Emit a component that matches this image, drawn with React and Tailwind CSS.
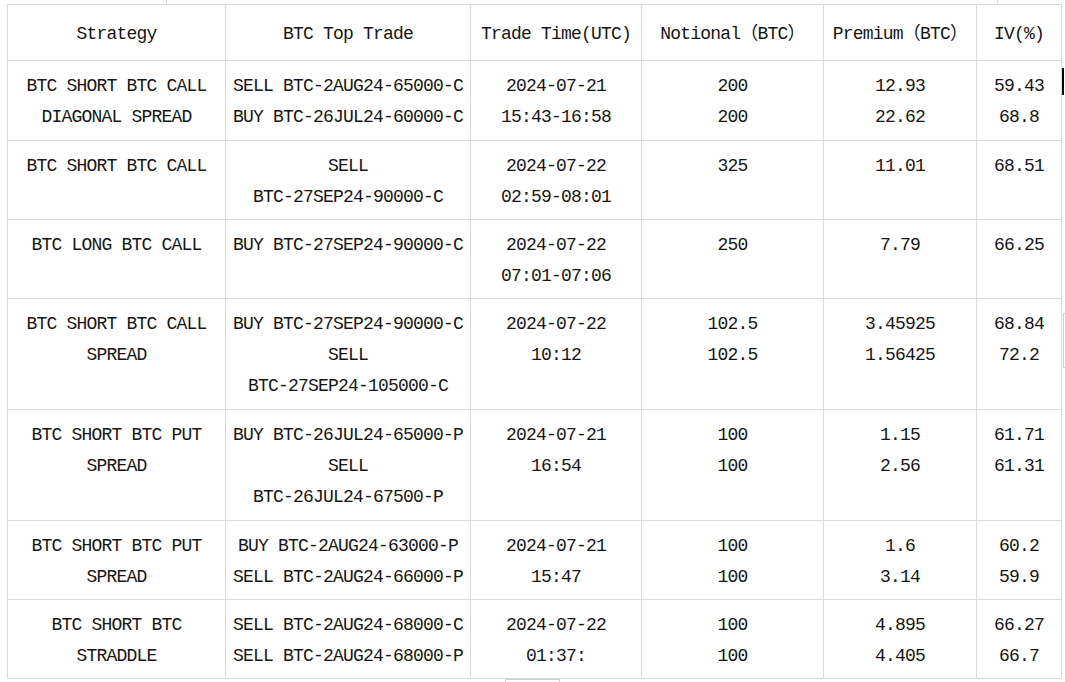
import React from 'react';

const headers = ['Strategy', 'BTC Top Trade', 'Trade Time(UTC)', 'Notional（BTC）', 'Premium（BTC）', 'IV(%)'];

// each cell is an array of lines, broken where the sheet breaks them
const rows = [
  {
    h: 'h-[80px]',
    strategy: ['BTC SHORT BTC CALL', 'DIAGONAL SPREAD'],
    trade: ['SELL BTC-2AUG24-65000-C', 'BUY BTC-26JUL24-60000-C'],
    time: ['2024-07-21', '15:43-16:58'],
    notional: ['200', '200'],
    premium: ['12.93', '22.62'],
    iv: ['59.43', '68.8'],
  },
  {
    h: 'h-[79px]',
    strategy: ['BTC SHORT BTC CALL'],
    trade: ['SELL', 'BTC-27SEP24-90000-C'],
    time: ['2024-07-22', '02:59-08:01'],
    notional: ['325'],
    premium: ['11.01'],
    iv: ['68.51'],
  },
  {
    h: 'h-[79px]',
    strategy: ['BTC LONG BTC CALL'],
    trade: ['BUY BTC-27SEP24-90000-C'],
    time: ['2024-07-22', '07:01-07:06'],
    notional: ['250'],
    premium: ['7.79'],
    iv: ['66.25'],
  },
  {
    h: 'h-[111px]',
    strategy: ['BTC SHORT BTC CALL', 'SPREAD'],
    trade: ['BUY BTC-27SEP24-90000-C', 'SELL', 'BTC-27SEP24-105000-C'],
    time: ['2024-07-22', '10:12'],
    notional: ['102.5', '102.5'],
    premium: ['3.45925', '1.56425'],
    iv: ['68.84', '72.2'],
  },
  {
    h: 'h-[111px]',
    strategy: ['BTC SHORT BTC PUT', 'SPREAD'],
    trade: ['BUY BTC-26JUL24-65000-P', 'SELL', 'BTC-26JUL24-67500-P'],
    time: ['2024-07-21', '16:54'],
    notional: ['100', '100'],
    premium: ['1.15', '2.56'],
    iv: ['61.71', '61.31'],
  },
  {
    h: 'h-[79px]',
    strategy: ['BTC SHORT BTC PUT', 'SPREAD'],
    trade: ['BUY BTC-2AUG24-63000-P', 'SELL BTC-2AUG24-66000-P'],
    time: ['2024-07-21', '15:47'],
    notional: ['100', '100'],
    premium: ['1.6', '3.14'],
    iv: ['60.2', '59.9'],
  },
  {
    h: 'h-[79px]',
    strategy: ['BTC SHORT BTC', 'STRADDLE'],
    trade: ['SELL BTC-2AUG24-68000-C', 'SELL BTC-2AUG24-68000-P'],
    time: ['2024-07-22', '01:37:'],
    notional: ['100', '100'],
    premium: ['4.895', '4.405'],
    iv: ['66.27', '66.7'],
  },
];

const Lines = ({ lines }) => (
  <>
    {lines.map((l, i) => (
      <div key={i} className="whitespace-nowrap">{l}</div>
    ))}
  </>
);

const App = () => {
  const cell = 'border border-[#dadada] text-center align-top pt-[10px] px-1';

  return (
    <div className="relative w-[1065px] h-[682px] overflow-hidden bg-white text-[#161616] font-['Liberation_Mono','Noto_Sans_CJK_SC',monospace] text-[18px] tracking-[-0.8px] leading-[31px]">
      {/* bits of the sheet row above */}
      <div className="flex h-[4px] pl-[166px]">
        <div className="w-[832px] h-full border-x border-[#dadada]" />
      </div>

      <table className="ml-[7px] table-fixed border-collapse w-[1054px]">
        <colgroup>
          <col className="w-[218px]" />
          <col className="w-[245px]" />
          <col className="w-[171px]" />
          <col className="w-[182px]" />
          <col className="w-[153px]" />
          <col className="w-[85px]" />
        </colgroup>
        <thead>
          <tr className="h-[56px]">
            {headers.map((h) => (
              <th key={h} className="border border-[#dadada] text-center align-middle font-normal whitespace-nowrap px-1 pt-[3px]">
                {h}
              </th>
            ))}
          </tr>
        </thead>
        <tbody>
          {rows.map((r, i) => (
            <tr key={i} className={r.h}>
              <td className={cell}><Lines lines={r.strategy} /></td>
              <td className={cell}><Lines lines={r.trade} /></td>
              <td className={cell}><Lines lines={r.time} /></td>
              <td className={cell}><Lines lines={r.notional} /></td>
              <td className={cell}><Lines lines={r.premium} /></td>
              <td className={cell}><Lines lines={r.iv} /></td>
            </tr>
          ))}
        </tbody>
      </table>

      {/* caret at the right edge */}
      <span className="absolute left-[1062px] top-[68px] w-[2px] h-[27px] bg-black" />
      {/* resize handle */}
      <span className="absolute left-[1063px] top-[313px] w-[3px] h-[55px] border-y border-l border-[#cfcfcf]" />
      {/* small tab at the bottom */}
      <span className="absolute left-[505px] top-[679px] w-[55px] h-[6px] border border-[#cfcfcf] bg-white" />
    </div>
  );
};

export default App;
